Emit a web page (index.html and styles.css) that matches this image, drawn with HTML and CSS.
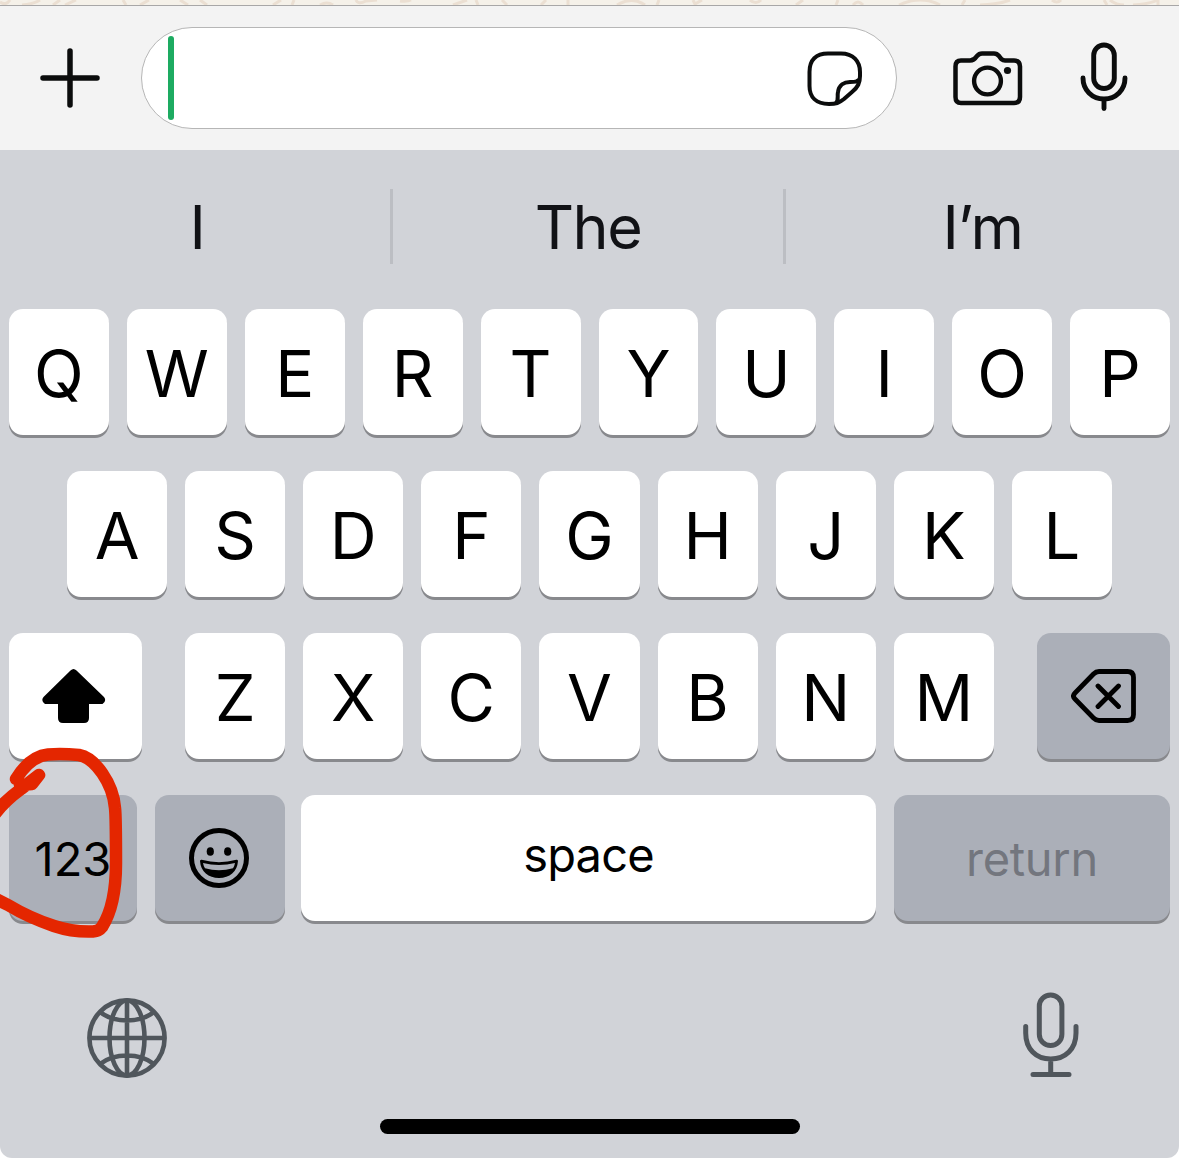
FILE: index.html
```html
<!DOCTYPE html>
<html lang="en">
<head>
<meta charset="utf-8">
<title>Message keyboard</title>
<link rel="stylesheet" href="styles.css">
</head>
<body>
<main class="screen">
  <div class="wallpaper">
    <svg width="1179" height="5" viewBox="0 0 1179 5" fill="none" stroke="#ebdfd2" stroke-width="3">
      <path d="M0 2Q6 6 10 0M22 5Q34 4 40 0M53 5L60 0M65 5L76 0M123 0L126 5M140 5L149 0M180 0L188 5M200 0L207 5M273 5L281 0M292 5L294 0M320 5Q327 1 333 5M356 0Q358 5 366 1L377 0M400 1Q407 2 411 0M453 5L467 0M476 0L478 5M502 0L507 5M541 5L546 0M568 0V5M617 5Q632-4 645 5M657 5L659 0M693 0L695 4L702 0M750 0Q756 5 761 0M796 5L803 0M838 0L836 5M853 5Q858-1 863 5M899 5Q921-5 940 5M962 5L965 0M980 5Q1000 4 1010 0M1052 0Q1057 4 1061 0M1104 0L1107 5M1110 0Q1116 5 1124 5M1133 5Q1150 4 1158 0V5"/>
    </svg>
  </div>
  <header class="composer">
    <svg class="plus" width="60" height="60" viewBox="0 0 60 60" fill="none" stroke="#0b0c0c" stroke-width="5.5" stroke-linecap="round"><path d="M3 30H57M30 3V57"/></svg>
    <div class="field">
      <span class="caret"></span>
      <svg class="sticker" width="56" height="56" viewBox="0 0 56 56" fill="none" stroke="#0b0c0c" stroke-width="4" stroke-linejoin="round"><path d="M21 2.500H34C46 2.500 53 10 53 21V25C53 32 51 36 45 41L37 48C32 52 29 53 22 53C9 53 2.500 46 2.500 35V21C2.500 9 9 2.500 21 2.500ZM29 52C32 49 30 45 31 41C32 34 37 31 43 31C48 31 50 31 53 28"/></svg>
    </div>
    <svg class="camera" width="70" height="55" viewBox="0 0 70 55"><path d="M8 9.500H17C20 9.500 22 8 24 5Q26 2.500 29 2.500H41Q44 2.500 46 5C48 8 49 9.500 52 9.500H61Q67 9.500 67 15.500V46Q67 52 61 52H8Q2.500 52 2.500 46V15.500Q2.500 9.500 8 9.500Z" fill="none" stroke="#0b0c0c" stroke-width="4.500"/><circle cx="34.500" cy="30" r="13.400" fill="none" stroke="#0b0c0c" stroke-width="4.400"/><circle cx="54.500" cy="19.500" r="3.600" fill="#0b0c0c"/></svg>
    <svg class="mic" width="48" height="70" viewBox="0 0 48 70" fill="none" stroke="#0b0c0c" stroke-width="4.900" stroke-linecap="round"><rect x="13.700" y="3" width="20.600" height="43.500" rx="10.300"/><path d="M3 36C3 48 12 57 24 57S45 48 45 36M24 57V66.500"/></svg>
  </header>
  <section class="keyboard">
    <div class="suggestions"><span>I</span><span>The</span><span>I’m</span></div>
    <div class="row"><div class="key">Q</div><div class="key">W</div><div class="key">E</div><div class="key">R</div><div class="key">T</div><div class="key">Y</div><div class="key">U</div><div class="key">I</div><div class="key">O</div><div class="key">P</div></div>
    <div class="row row-home"><div class="key">A</div><div class="key">S</div><div class="key">D</div><div class="key">F</div><div class="key">G</div><div class="key">H</div><div class="key">J</div><div class="key">K</div><div class="key">L</div></div>
    <div class="row row-lower">
      <div class="key side shift"><svg width="66" height="56" viewBox="0 0 66 56"><path d="M29.500 2.500Q32.500-.5 35.500 2.500L63 29Q66 33 61.500 36H48V50Q48 55 43 55H22Q17 55 17 50V36H4Q-.5 33 2.500 29Z" fill="#000"/></svg></div>
      <div class="letters"><div class="key">Z</div><div class="key">X</div><div class="key">C</div><div class="key">V</div><div class="key">B</div><div class="key">N</div><div class="key">M</div></div>
      <div class="key side gray"><svg width="66" height="56" viewBox="0 0 66 56" fill="none" stroke="#000" stroke-width="4.800" stroke-linecap="round" stroke-linejoin="round"><path d="M28 3.500H56.500Q62.500 3.500 62.500 9.500V46.500Q62.500 52.500 56.500 52.500H28Q25 52.500 22.500 50L4 31Q1 28 4 25L22.500 6Q25 3.500 28 3.500ZM27 18L47.500 38.500M47.500 18L27 38.500"/></svg></div>
    </div>
    <div class="row row-bottom">
      <div class="key gray numbers">123</div>
      <div class="key gray emoji"><svg width="60" height="60" viewBox="0 0 60 60"><circle cx="30" cy="30" r="27.500" fill="none" stroke="#000" stroke-width="5"/><ellipse cx="21.300" cy="23.500" rx="3.600" ry="4.300"/><ellipse cx="38.700" cy="23.500" rx="3.600" ry="4.300"/><path d="M12.300 33Q30 38 47.700 33C47 43 40 48.700 30 48.700S13 43 12.300 33Z" stroke="#000" stroke-width="2.600" stroke-linejoin="round"/><path d="M14 35Q30 39 46 35Q45.500 38 44 40.300Q30 44.300 16 40.300Q14.500 38 14 35Z" fill="#abafb8"/></svg></div>
      <div class="key space">space</div>
      <div class="key gray return">return</div>
    </div>
    <footer class="tools">
      <svg width="80" height="80" viewBox="0 0 80 80" fill="none" stroke="#50565c" stroke-width="4.600"><circle cx="40" cy="40" r="37.600"/><path d="M40 2V78M2 40H78M13 14Q24 22.500 40 22.500T67 14M13 66Q24 57.500 40 57.500T67 66"/><ellipse cx="40" cy="40" rx="17.500" ry="37.500"/></svg>
      <svg class="dictate" width="56" height="86" viewBox="0 0 56 86" fill="none" stroke="#50565c" stroke-width="5" stroke-linecap="round"><rect x="16.300" y="3" width="22.600" height="50.500" rx="11.300"/><path d="M2.700 34.500V41C2.700 57 13 67 27.700 67S53 57 53 41V34.500M27.700 67V82.500M10 82.500H46"/></svg>
    </footer>
    <div class="home"></div>
  </section>
  <svg class="scribble" width="130" height="200" viewBox="0 0 130 200" fill="none" stroke="#e42600" stroke-width="12.500" stroke-linecap="round" stroke-linejoin="round"><path d="M16 39C24 26 34 16 48 14.500Q62 13.500 79 15C95 18 113 43 115 68Q116 76 116 123C116 151 111 173 102 187Q99 191 93 191.500C80 192 66 190 54 186C36 180 18 171 8 165L-6 158M-8 78C0 66 10 57 21 49L39 35L32 44L20 45"/></svg>
</main>
</body>
</html>
```
FILE: styles.css
```css
* { box-sizing: border-box; }
body { margin: 0; background: #fff; font-family: Inter, "Liberation Sans", sans-serif; color: #000; }
svg { display: block; flex: none; }
.screen { position: relative; width: 1179px; height: 1158px; overflow: hidden; }
.wallpaper { height: 5px; background: #f5f1e9; }
.composer { display: flex; align-items: center; height: 145px; padding-left: 40px; background: #f3f3f3; border-top: 1px solid #a8a7a7; }
.field { display: flex; align-items: center; justify-content: space-between; width: 756px; height: 102px; margin-left: 41px; padding: 0 33px 0 26px; background: #fff; border: 1px solid #b6b6b6; border-radius: 51px; }
.caret { width: 6px; height: 84px; border-radius: 3px; background: #1dab61; }
.sticker { margin-top: 1px; }
.camera { margin-left: 56px; }
.mic { margin-left: 57px; margin-top: -3px; }
.keyboard { height: 1008px; background: #d1d3d8; border-radius: 0 0 12px 12px; }
.suggestions { display: grid; grid-template-columns: 390px 393px 396px; height: 159px; padding-top: 39px; }
.suggestions span { height: 75px; font-size: 61px; line-height: 77px; letter-spacing: -1.5px; text-align: center; color: #111216; }
.suggestions span:first-child { padding-left: 4px; }
.suggestions span + span { border-left: 3px solid #bcbec3; }
.row { display: flex; gap: 18px; height: 126px; margin-bottom: 36px; padding: 0 9px; }
.key { display: flex; flex: 1; align-items: center; justify-content: center; height: 126px; padding-top: 3px; background: #fff; border-radius: 14px; box-shadow: 0 3px 0 #88898d; font-size: 65px; line-height: 1; }
.row-home { padding: 0 67px; }
.row-lower { gap: 43px; }
.letters { display: flex; flex: 1; gap: 18px; }
.side { flex: 0 0 133px; padding-top: 0; }
.shift { padding-right: 3px; }
.gray { background: #abafb8; }
.row-bottom { gap: 0; }
.numbers { flex: 0 0 128px; padding: 0; font-size: 47px; }
.emoji { flex: 0 0 130px; margin-left: 18px; padding: 0 2px 0 0; }
.space { flex: 0 0 575px; margin-left: 16px; padding: 0 0 8px; font-size: 47px; letter-spacing: -.8px; }
.return { flex: 0 0 276px; margin-left: 18px; padding: 0; font-size: 47px; letter-spacing: -.3px; color: #73767e; }
.tools { display: flex; justify-content: space-between; height: 162px; padding: 41px 100px 0 87px; }
.dictate { margin-top: -6px; }
.home { width: 420px; height: 15px; margin: 0 auto; border-radius: 8px; background: #000; }
.scribble { position: absolute; left: 0; top: 740px; }
```
